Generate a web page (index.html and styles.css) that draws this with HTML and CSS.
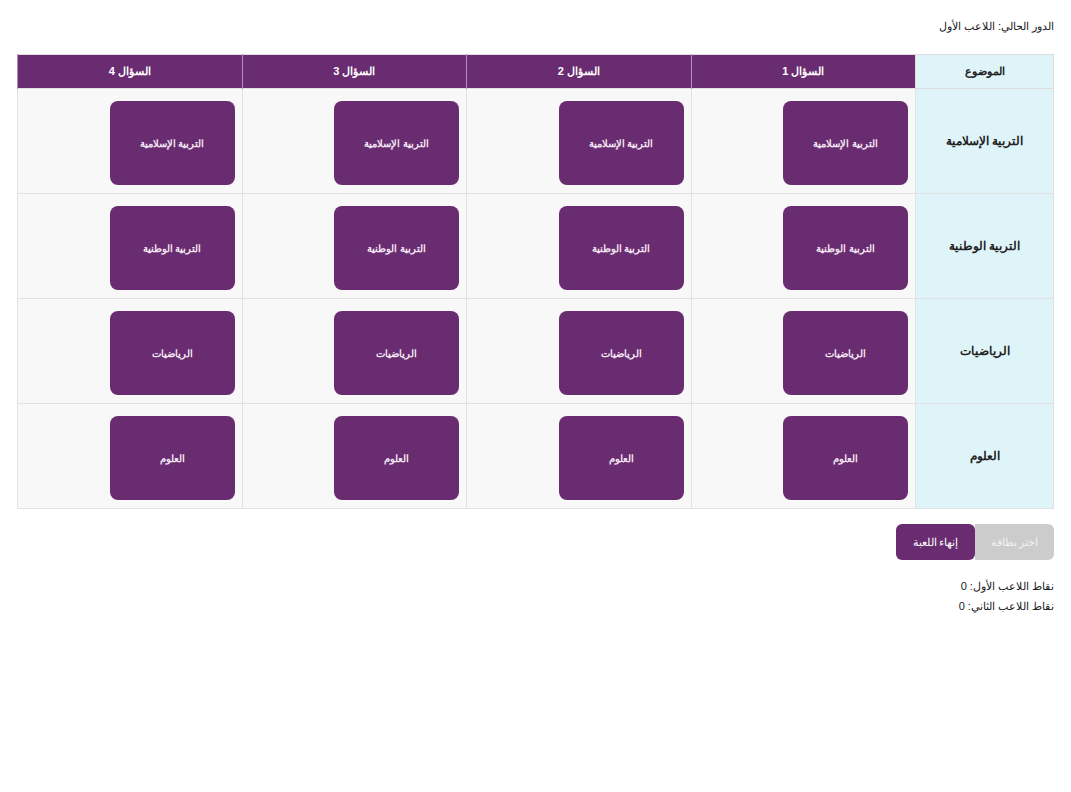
FILE: index.html
```html
<!DOCTYPE html>
<html lang="ar" dir="rtl">
<head>
    <meta charset="UTF-8">
    <title>لعبة الأسئلة</title>
    <link rel="stylesheet" href="styles.css">
</head>
<body>
    <p class="turn">الدور الحالي: اللاعب الأول</p>

    <table class="board">
        <colgroup>
            <col class="col-subject">
            <col>
            <col>
            <col>
            <col>
        </colgroup>
        <thead>
            <tr>
                <th class="subject">الموضوع</th>
                <th>السؤال 1</th>
                <th>السؤال 2</th>
                <th>السؤال 3</th>
                <th>السؤال 4</th>
            </tr>
        </thead>
        <tbody>
            <tr>
                <td class="subject">التربية الإسلامية</td>
                <td><button class="card">التربية الإسلامية</button></td>
                <td><button class="card">التربية الإسلامية</button></td>
                <td><button class="card">التربية الإسلامية</button></td>
                <td><button class="card">التربية الإسلامية</button></td>
            </tr>
            <tr>
                <td class="subject">التربية الوطنية</td>
                <td><button class="card">التربية الوطنية</button></td>
                <td><button class="card">التربية الوطنية</button></td>
                <td><button class="card">التربية الوطنية</button></td>
                <td><button class="card">التربية الوطنية</button></td>
            </tr>
            <tr>
                <td class="subject">الرياضيات</td>
                <td><button class="card">الرياضيات</button></td>
                <td><button class="card">الرياضيات</button></td>
                <td><button class="card">الرياضيات</button></td>
                <td><button class="card">الرياضيات</button></td>
            </tr>
            <tr>
                <td class="subject">العلوم</td>
                <td><button class="card">العلوم</button></td>
                <td><button class="card">العلوم</button></td>
                <td><button class="card">العلوم</button></td>
                <td><button class="card">العلوم</button></td>
            </tr>
        </tbody>
    </table>

    <div class="actions">
        <button class="btn btn-disabled" disabled>اختر بطاقة</button>
        <button class="btn btn-end">إنهاء اللعبة</button>
    </div>

    <div class="scores">
        <div>نقاط اللاعب الأول: 0</div>
        <div>نقاط اللاعب الثاني: 0</div>
    </div>
</body>
</html>
```

FILE: styles.css
```css
body {
    font-family: "Liberation Sans", Arial, sans-serif;
    font-size: 11px;
    color: #222;
    background-color: #fff;
    margin: 0;
    padding: 0 17px;
}

.turn {
    margin: 19px 0 21px;
    line-height: 14px;
}

.board {
    width: 100%;
    border-collapse: collapse;
    table-layout: fixed;
    border: 1px solid #ddd;
}

.col-subject {
    width: 138px;
}

.board th {
    background-color: #6a2c70;
    color: #fff;
    font-weight: bold;
    font-size: 11px;
    padding: 10px 8px;
    line-height: 13px;
    border-left: 1px solid #b48fb7;
}

.board th.subject {
    background-color: #dff4f8;
    color: #222;
    border: 1px solid #ddd;
}

.board td {
    background-color: #f8f8f8;
    border: 1px solid #e2e2e2;
    padding: 12px 7px 8px;
    vertical-align: top;
}

.board td.subject {
    background-color: #dff4f8;
    font-weight: bold;
    font-size: 12px;
    text-align: center;
    vertical-align: middle;
    padding: 0 8px;
}

.card {
    display: block;
    width: 125px;
    height: 84px;
    border: none;
    border-radius: 8px;
    background-color: #6a2c70;
    color: #f2e6f2;
    font-family: "Liberation Sans", Arial, sans-serif;
    font-size: 9.5px;
    font-weight: bold;
    cursor: pointer;
    padding: 0;
}

.actions {
    display: flex;
    margin-top: 15px;
}

.btn {
    border: none;
    height: 36px;
    width: 79px;
    font-family: "Liberation Sans", Arial, sans-serif;
    font-size: 10.5px;
    padding: 0;
}

.btn-disabled {
    background-color: #cccccc;
    color: #f2f2f2;
    border-radius: 0 6px 6px 0;
}

.btn-end {
    background-color: #6a2c70;
    color: #fff;
    border-radius: 6px;
    cursor: pointer;
}

.scores {
    margin-top: 16px;
    line-height: 20px;
}
```
